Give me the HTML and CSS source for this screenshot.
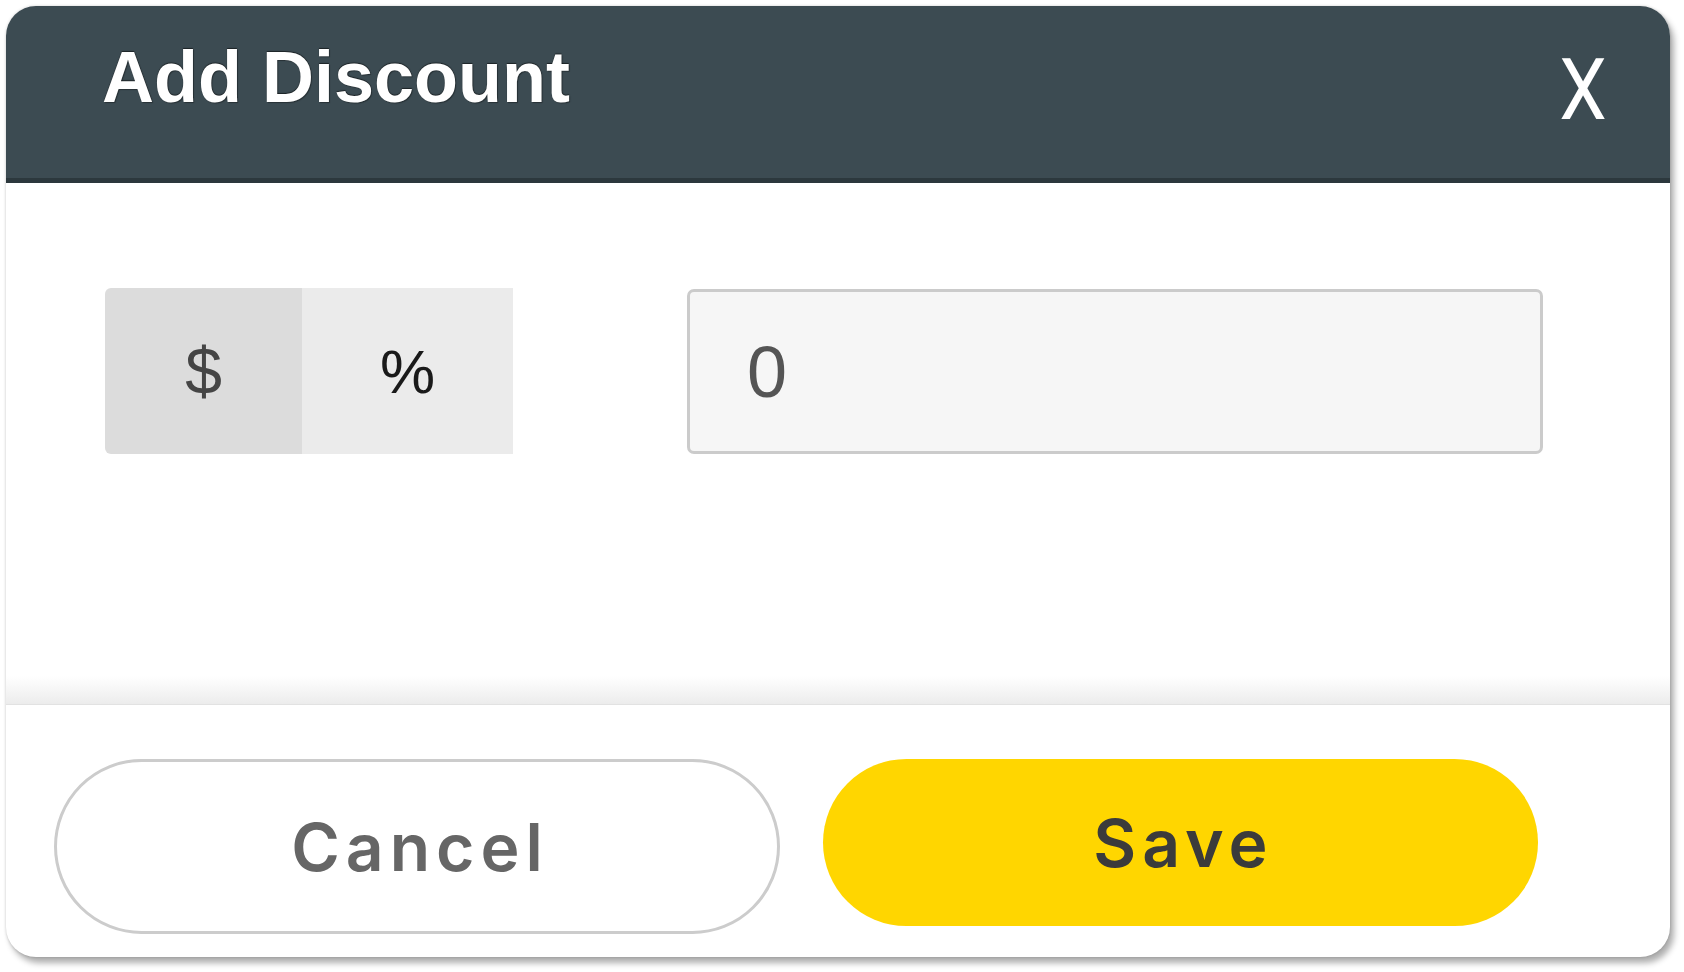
FILE: index.html
```html
<!DOCTYPE html>
<html lang="en">
<head>
<meta charset="utf-8">
<title>Add Discount</title>
<link rel="stylesheet" href="styles.css">
</head>
<body>
  <div class="dialog">
    <div class="header">
      <h1 class="title">Add Discount</h1>
      <button class="close" type="button"><span class="close-glyph">X</span></button>
    </div>
    <div class="body">
      <div class="toggle">
        <button class="seg seg-active" type="button">$</button>
        <button class="seg seg-idle" type="button">%</button>
      </div>
      <div class="amount">0</div>
    </div>
    <div class="footer">
      <button class="btn btn-cancel" type="button">Cancel</button>
      <button class="btn btn-save" type="button">Save</button>
    </div>
  </div>
</body>
</html>
```

FILE: styles.css
```css
html, body {
  margin: 0;
  padding: 0;
  background: #ffffff;
}

body {
  width: 1684px;
  height: 972px;
  overflow: hidden;
  font-family: "Liberation Sans", Arial, sans-serif;
}

.dialog {
  margin: 6px 0 0 6px;
  width: 1664px;
  height: 951px;
  background: #ffffff;
  border-radius: 30px;
  overflow: hidden;
  display: flex;
  flex-direction: column;
  box-shadow: 4px 6px 6px rgba(0, 0, 0, 0.32), 0 0 3px rgba(0, 0, 0, 0.18);
}

.header {
  flex: 0 0 auto;
  height: 172px;
  background: #3c4b52;
  border-bottom: 5px solid #2c383d;
  display: flex;
  align-items: flex-start;
  padding: 0 60px 0 96px;
}

.title {
  margin: 35px 0 0 0;
  font-family: "Liberation Sans", Arial, sans-serif;
  font-weight: 700;
  font-size: 72px;
  line-height: 72px;
  color: #ffffff;
  text-shadow: 0 -1px 1px rgba(0, 0, 0, 0.55), 1px 1px 1px rgba(0, 0, 0, 0.35);
}

.close {
  margin: 41px 0 0 auto;
  padding: 0;
  border: 0;
  background: transparent;
  color: #ffffff;
  cursor: pointer;
}

.close-glyph {
  display: inline-block;
  font-family: Roboto, "Liberation Sans", sans-serif;
  font-weight: 400;
  font-size: 86px;
  line-height: 86px;
  transform: scaleX(0.88);
}

.body {
  flex: 0 0 auto;
  height: 416px;
  padding: 105px 0 0 99px;
  display: flex;
  align-items: flex-start;
  gap: 174px;
  background: linear-gradient(to bottom, #ffffff 0, #ffffff calc(100% - 28px), #ececec 100%);
  border-bottom: 1px solid #e2e2e2;
}

.toggle {
  display: flex;
  height: 166px;
  border-radius: 6px 0 0 6px;
  overflow: hidden;
}

.seg {
  border: 0;
  margin: 0;
  padding: 0;
  height: 166px;
  font-family: "Liberation Sans", Arial, sans-serif;
  font-size: 66px;
  cursor: pointer;
}

.seg-active {
  width: 197px;
  background: #dcdcdc;
  color: #454545;
}

.seg-idle {
  width: 211px;
  background: #ebebeb;
  color: #1a1a1a;
  font-size: 62px;
}

.amount {
  box-sizing: border-box;
  width: 856px;
  height: 165px;
  margin-top: 1px;
  padding-left: 57px;
  display: flex;
  align-items: center;
  background: #f6f6f6;
  border: 3px solid #cbcbcb;
  border-radius: 7px;
  font-family: "Liberation Sans", Arial, sans-serif;
  font-size: 72px;
  color: #555555;
}

.footer {
  flex: 1 1 auto;
  padding: 54px 0 0 48px;
  display: flex;
  align-items: flex-start;
  gap: 43px;
}

.btn {
  box-sizing: border-box;
  border-radius: 90px;
  font-family: Inter, "Open Sans", sans-serif;
  font-weight: 600;
  font-size: 66px;
  letter-spacing: 6px;
  padding: 0 0 0 6px;
  cursor: pointer;
}

.btn-cancel {
  width: 726px;
  height: 175px;
  background: #ffffff;
  border: 3px solid #cccccc;
  color: #666666;
}

.btn-save {
  width: 715px;
  height: 167px;
  background: #ffd600;
  border: 0;
  color: #3b3b3b;
}
```
